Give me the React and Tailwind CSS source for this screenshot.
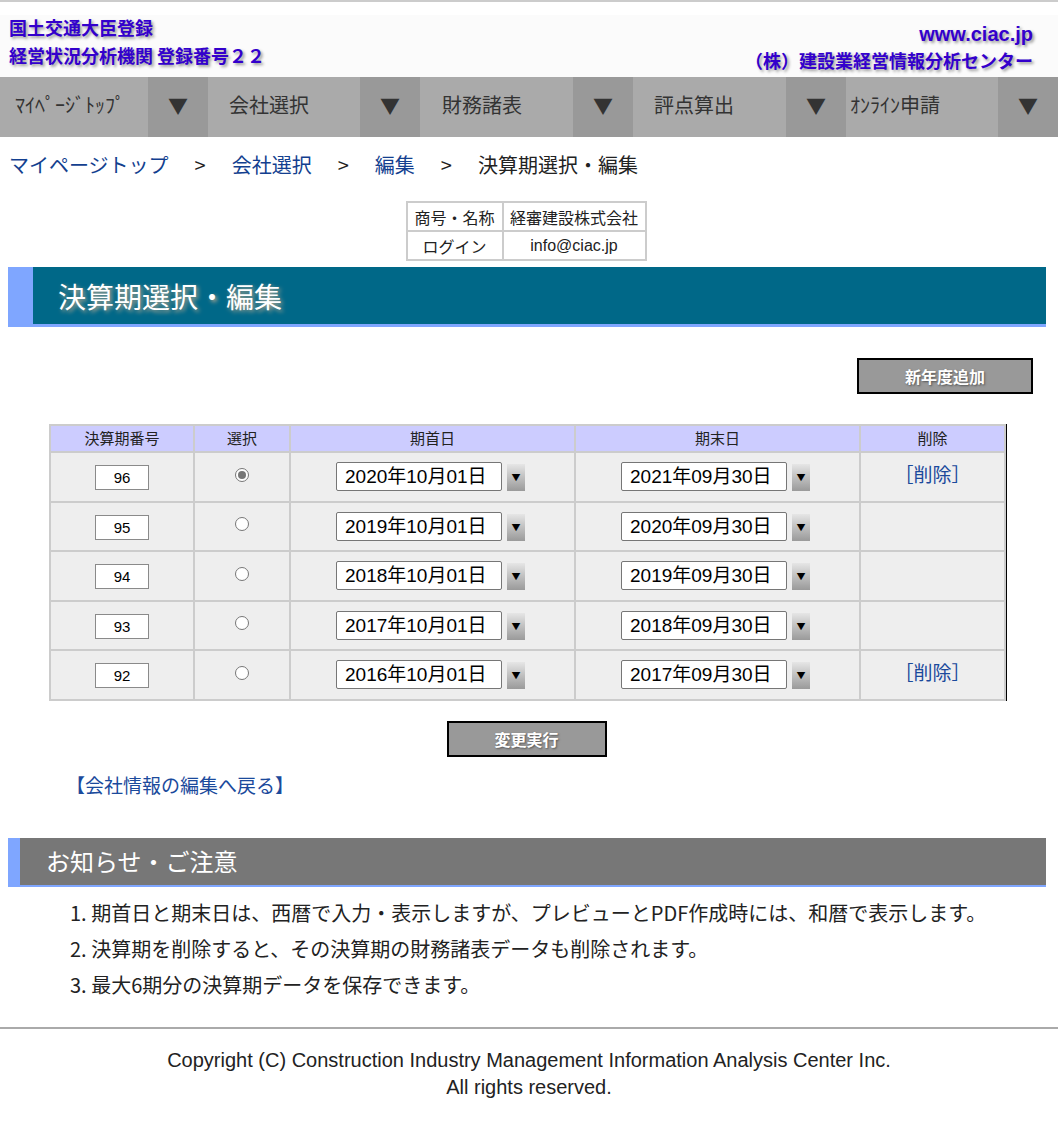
import React from "react"

const jp = "font-['Noto_Sans_CJK_JP',sans-serif]"
const latin = "font-['Liberation_Sans','Noto_Sans_CJK_JP',sans-serif]"

const navItems = [
  { label: "ﾏｲﾍﾟｰｼﾞﾄｯﾌﾟ", w: "w-[208px]", pl: "pl-[15px]" },
  { label: "会社選択", w: "w-[212px]", pl: "pl-[21px]" },
  { label: "財務諸表", w: "w-[213px]", pl: "pl-[22px]" },
  { label: "評点算出", w: "w-[213px]", pl: "pl-[21px]" },
  { label: "ｵﾝﾗｲﾝ申請", w: "w-[212px]", pl: "pl-[4px]" },
]

const periods = [
  { no: "96", start: "2020年10月01日", end: "2021年09月30日", checked: true, del: true },
  { no: "95", start: "2019年10月01日", end: "2020年09月30日" },
  { no: "94", start: "2018年10月01日", end: "2019年09月30日" },
  { no: "93", start: "2017年10月01日", end: "2018年09月30日" },
  { no: "92", start: "2016年10月01日", end: "2017年09月30日", del: true },
]

function DateSelect({ value }) {
  return (
    <div className="flex items-center justify-center gap-[5px] pr-[4px]">
      <div className={`h-[29px] w-[166px] rounded-[2px] border border-[#767676] bg-white pl-[8px] text-left text-[19px] leading-[27px] text-black ${latin}`}>
        {value}
      </div>
      <div className="mt-[2px] flex h-[27px] w-[18px] items-center justify-center bg-gradient-to-b from-[#e6e6e6] to-[#9a9a9a]">
        <span className="text-[9px] leading-none text-black">▼</span>
      </div>
    </div>
  )
}

function Radio({ checked }) {
  return (
    <span className="inline-flex h-[14px] w-[14px] items-center justify-center rounded-full border border-[#777] bg-white">
      {checked && <span className="h-[8px] w-[8px] rounded-full bg-[#777]" />}
    </span>
  )
}

function GrayButton({ children, w }) {
  return (
    <button
      type="button"
      className={`h-[36px] ${w} border-2 border-black bg-[#999999] text-[16px] font-bold text-white [text-shadow:1px_1px_2px_#555] ${jp}`}
    >
      {children}
    </button>
  )
}

export default function App() {
  return (
    <div className={`w-[1058px] bg-white text-[#222] ${jp}`}>
      {/* top line */}
      <div className="h-[2px] bg-[#cccccc]" />
      <div className="h-[13px]" />

      {/* header */}
      <header className="flex h-[62px] justify-between bg-[#fbfbfb] pl-[9px] pr-[25px]">
        <div className="-mt-[2px] text-[18px] font-bold leading-[28px] text-[#3300cc] [text-shadow:2px_2px_3px_#999]">
          <div>国土交通大臣登録</div>
          <div>経営状況分析機関 登録番号２２</div>
        </div>
        <div className="flex flex-col items-end font-bold text-[#3300cc] [text-shadow:2px_2px_3px_#999]">
          <div className={`mt-[6px] text-[20px] leading-[26px] ${latin}`}>www.ciac.jp</div>
          <div className="text-[18px] leading-[26px]">（株）建設業経営情報分析センター</div>
        </div>
      </header>

      {/* nav */}
      <nav className="flex h-[60px]">
        {navItems.map((item) => (
          <div key={item.label} className={`flex ${item.w}`}>
            <div className={`flex flex-1 items-center bg-[#aaaaaa] pb-[4px] text-[20px] text-[#333] ${item.pl}`}>
              {item.label}
            </div>
            <div className="flex w-[60px] items-center justify-center bg-[#999999] pb-[2px] text-[20px] text-[#333]">▼</div>
          </div>
        ))}
      </nav>

      {/* breadcrumb */}
      <div className="flex items-center pl-[9px] pt-[14px] text-[20px] leading-[28px]">
        <a className="text-[#133f8f]">マイページトップ</a>
        <span className="px-[26px] text-[#222]">&gt;</span>
        <a className="text-[#133f8f]">会社選択</a>
        <span className="px-[26px] text-[#222]">&gt;</span>
        <a className="text-[#133f8f]">編集</a>
        <span className="px-[26px] text-[#222]">&gt;</span>
        <span className="text-[#222]">決算期選択・編集</span>
      </div>

      {/* company info */}
      <div className="mt-[22px] flex justify-center pr-[6px]">
        <table className="border-collapse text-[16px] text-[#222]">
          <tbody>
            <tr className="h-[29px]">
              <td className="w-[96px] border-2 border-[#cccccc] text-center">商号・名称</td>
              <td className="w-[143px] border-2 border-[#cccccc] px-[4px] text-center">経審建設株式会社</td>
            </tr>
            <tr className="h-[29px]">
              <td className="border-2 border-[#cccccc] text-center">ログイン</td>
              <td className={`border-2 border-[#cccccc] text-center ${latin}`}>info@ciac.jp</td>
            </tr>
          </tbody>
        </table>
      </div>

      {/* title bar */}
      <div className="ml-[8px] mt-[6px] flex h-[60px] w-[1038px] border-b-[3px] border-[#7fa6ff]">
        <div className="w-[25px] bg-[#7fa6ff]" />
        <div className="flex flex-1 items-center bg-[#006888] pl-[25px] text-[28px] text-white [text-shadow:2px_2px_4px_#b8a890]">
          決算期選択・編集
        </div>
      </div>

      {/* add button */}
      <div className="ml-[8px] mt-[31px] flex w-[1038px] justify-end pr-[13px]">
        <GrayButton w="w-[176px]">新年度追加</GrayButton>
      </div>

      {/* periods table */}
      <div className="ml-[49px] mt-[30px] inline-block border-r border-black">
        <table className="w-[955px] table-fixed border-collapse text-[15px]">
          <colgroup>
            <col className="w-[144px]" />
            <col className="w-[96px]" />
            <col className="w-[285px]" />
            <col className="w-[285px]" />
            <col className="w-[145px]" />
          </colgroup>
          <thead>
            <tr className="h-[27px] bg-[#ccccff] text-[#222]">
              {["決算期番号", "選択", "期首日", "期末日", "削除"].map((h) => (
                <th key={h} className="border-2 border-[#cccccc] font-normal">{h}</th>
              ))}
            </tr>
          </thead>
          <tbody>
            {periods.map((p) => (
              <tr key={p.no} className="h-[49.5px] bg-[#eeeeee]">
                <td className="border-2 border-[#cccccc] text-center">
                  <div className={`mx-auto mt-[2px] h-[25px] w-[54px] border border-[#8a8a8a] bg-white text-center text-[15px] leading-[23px] text-black ${latin}`}>
                    {p.no}
                  </div>
                </td>
                <td className="border-2 border-[#cccccc] text-center">
                  <div className="flex justify-center pb-[4px]">
                    <Radio checked={p.checked} />
                  </div>
                </td>
                <td className="border-2 border-[#cccccc]">
                  <DateSelect value={p.start} />
                </td>
                <td className="border-2 border-[#cccccc]">
                  <DateSelect value={p.end} />
                </td>
                <td className="border-2 border-[#cccccc] text-center text-[19px] text-[#1b4a9c]">
                  {p.del ? <a className="relative -top-[3px]">［削除］</a> : null}
                </td>
              </tr>
            ))}
          </tbody>
        </table>
      </div>

      {/* execute */}
      <div className="mt-[15px] flex justify-center pr-[5px]">
        <GrayButton w="w-[160px]">変更実行</GrayButton>
      </div>

      <div className="mt-[14px] pl-[66px] text-[19px] leading-[28px] text-[#1b4a9c]">
        <a>【会社情報の編集へ戻る】</a>
      </div>

      {/* notice */}
      <div className="ml-[8px] mt-[39px] flex h-[49px] w-[1038px] border-b-2 border-[#7fa6ff]">
        <div className="w-[12px] bg-[#7fa6ff]" />
        <div className="flex flex-1 items-center bg-[#777777] pl-[26px] text-[24px] text-white">
          お知らせ・ご注意
        </div>
      </div>

      <ol className="mt-[8px] pl-[70px] text-[20px] leading-[36px] text-[#222]">
        <li>1. 期首日と期末日は、西暦で入力・表示しますが、プレビューとPDF作成時には、和暦で表示します。</li>
        <li>2. 決算期を削除すると、その決算期の財務諸表データも削除されます。</li>
        <li>3. 最大6期分の決算期データを保存できます。</li>
      </ol>

      {/* footer */}
      <div className="mt-[24px] h-[2px] bg-[#aaaaaa]" />
      <footer className={`pt-[18px] pb-[26px] text-center text-[20px] leading-[27px] text-[#222] ${latin}`}>
        <div>Copyright (C) Construction Industry Management Information Analysis Center Inc.</div>
        <div>All rights reserved.</div>
      </footer>
    </div>
  )
}
